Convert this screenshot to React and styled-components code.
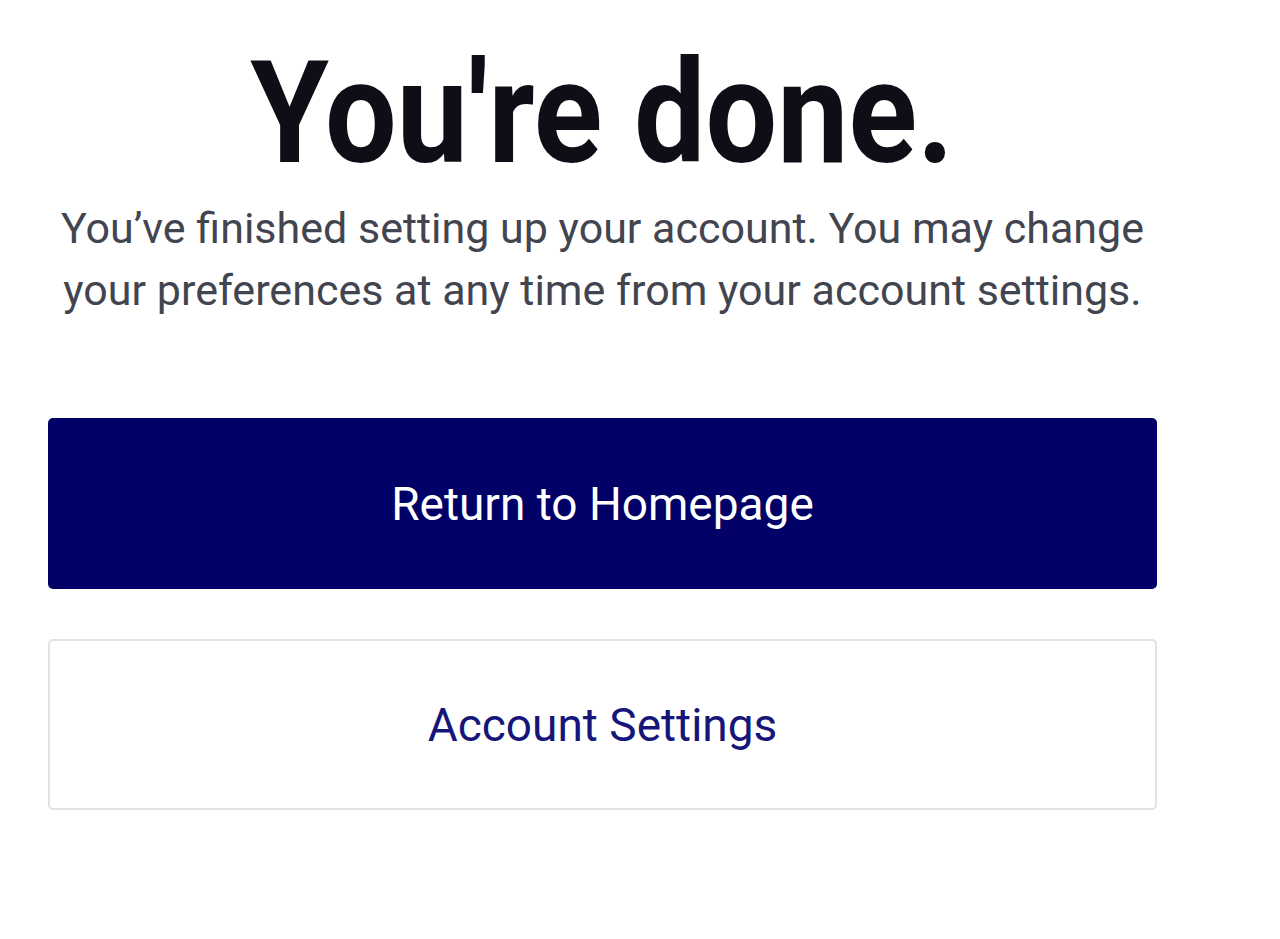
import React from "react";
import styled, { createGlobalStyle } from "styled-components";

const Global = createGlobalStyle`
  html, body { margin: 0; padding: 0; background: #ffffff; }
  body { font-family: Roboto, "Liberation Sans", sans-serif; }
`;

const Page = styled.main`
  width: 1109px;
  padding: 44px 0 0 48px;
  display: flex;
  flex-direction: column;
  align-items: center;
`;

const Title = styled.h1`
  margin: 0;
  font-family: Roboto, "Liberation Sans", sans-serif;
  font-weight: 700;
  font-size: 142px;
  line-height: 140px;
  color: #0d0e16;
  letter-spacing: 0;
  transform: scaleX(0.895);
  white-space: nowrap;
`;

const Lead = styled.p`
  margin: 13px 0 0;
  font-size: 43px;
  line-height: 62px;
  color: #42454f;
  text-align: center;
  white-space: nowrap;
`;

const Actions = styled.div`
  width: 100%;
  margin-top: 97px;
  display: flex;
  flex-direction: column;
  gap: 50px;
`;

const Button = styled.button`
  box-sizing: border-box;
  width: 100%;
  height: 171px;
  border-radius: 5px;
  font-family: Roboto, "Liberation Sans", sans-serif;
  font-size: 46px;
  font-weight: 400;
  cursor: pointer;
  background: ${(p) => (p.$primary ? "#000066" : "#ffffff")};
  color: ${(p) => (p.$primary ? "#ffffff" : "#16167a")};
  border: ${(p) => (p.$primary ? "none" : "2px solid #e1e1e8")};
`;

export default function App() {
  return (
    <>
      <Global />
      <Page>
        <Title>You're done.</Title>
        <Lead>
          You’ve finished setting up your account. You may change
          <br />
          your preferences at any time from your account settings.
        </Lead>
        <Actions>
          <Button $primary>Return to Homepage</Button>
          <Button>Account Settings</Button>
        </Actions>
      </Page>
    </>
  );
}
